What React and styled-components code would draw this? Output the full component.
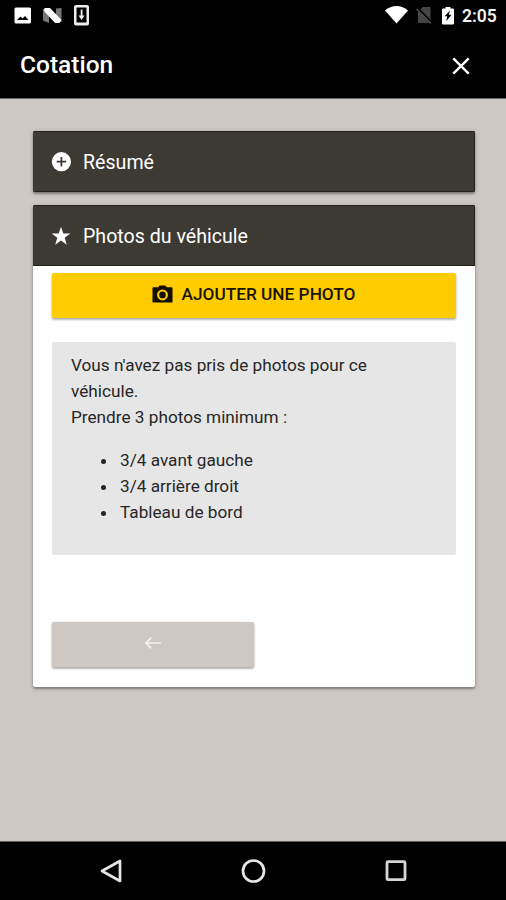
import React from 'react';
import styled, { createGlobalStyle } from 'styled-components';

const GlobalStyle = createGlobalStyle`
  * {
    box-sizing: border-box;
  }
  body {
    margin: 0;
    font-family: Roboto, 'Liberation Sans', sans-serif;
  }
`;

const Screen = styled.div`
  display: flex;
  flex-direction: column;
  height: 900px;
  width: 506px;
  overflow: hidden;
  background-color: #cdc8c4;
`;

const StatusBar = styled.div`
  display: flex;
  flex: none;
  justify-content: space-between;
  height: 31px;
  padding: 0 8px 0 14px;
  background-color: #000000;
`;

const StatusGroup = styled.div`
  display: flex;
  align-items: center;
  gap: ${(props) => props.$gap}px;
`;

const Clock = styled.div`
  width: 36px;
  margin-left: -1px;
  padding-top: 1px;
  color: #f4f4f4;
  font-size: 17.5px;
  font-weight: 600;
  white-space: nowrap;
`;

const AppBar = styled.header`
  display: flex;
  flex: none;
  align-items: center;
  justify-content: space-between;
  height: 68px;
  padding: 1px 36px 0 20px;
  background-color: #000000;
  border-bottom: 1px solid #63605d;
`;

const Title = styled.h1`
  margin: 0;
  padding-bottom: 2px;
  color: #ffffff;
  font-size: 24.5px;
  font-weight: 500;
`;

const IconButton = styled.button`
  display: flex;
  padding: 1px 0 0;
  border: none;
  background: none;
`;

const Content = styled.main`
  display: flex;
  flex: 1;
  flex-direction: column;
  gap: 13px;
  padding: 32px 31px 0 33px;
`;

const Card = styled.section`
  overflow: hidden;
  border-radius: 2px;
  background-color: #ffffff;
  box-shadow: 0 2px 2px rgba(0, 0, 0, 0.26), 0 1px 4px rgba(0, 0, 0, 0.24);
`;

const CardHeader = styled.div`
  display: flex;
  align-items: center;
  gap: 12px;
  height: 61px;
  padding-left: 17px;
  background-color: #3d3a34;
  border: 1px solid #25221d;
  border-left-color: #3d3a34;
  color: #ffffff;
  font-size: 19.6px;
`;

const CardTitle = styled.span`
  padding-top: 2px;
`;

const CardBody = styled.div`
  height: 421px;
  padding: 7px 19px 0;
`;

const Button = styled.button`
  display: flex;
  align-items: center;
  justify-content: center;
  gap: 8px;
  width: ${(props) => (props.$half ? '50%' : '100%')};
  height: 45px;
  padding: 0 0 ${(props) => (props.$half ? 3 : 4)}px;
  border: none;
  border-radius: 2px;
  background-color: ${(props) => (props.$half ? '#cdc8c4' : '#ffcc00')};
  box-shadow: 0 2px 2px rgba(0, 0, 0, 0.2), 0 1px 3px rgba(0, 0, 0, 0.2);
  color: #191400;
  font-family: inherit;
  font-size: 17.25px;
  font-weight: 500;
`;

const Notice = styled.div`
  height: 213px;
  margin: 24px 0 67px;
  padding: 10px 19px;
  border-radius: 2px;
  background-color: #e6e6e6;
  color: #262626;
  font-size: 17.2px;
  line-height: 26px;
  p {
    margin: 0;
  }
  ul {
    margin: 17px 0 0;
    padding-left: 47px;
  }
  li {
    padding-left: 2px;
  }
`;

const NavBar = styled.nav`
  display: flex;
  flex: none;
  align-items: center;
  justify-content: space-between;
  height: 59px;
  padding: 0 97px 0 99px;
  background-color: #000000;
  border-top: 1px solid #63605d;
`;

const App = () => {
  return (
    <>
      <GlobalStyle />
      <Screen>
        <StatusBar>
          <StatusGroup $gap={11}>
            <svg width='18' height='31' viewBox='0 0 18 31'>
              <rect x='0.5' y='7.5' width='16.5' height='16' rx='1.5' fill='#fff' />
              <path d='M3 20 L6.5 16.5 L8.5 18.5 L11 16 L14.5 20Z' fill='#000' />
            </svg>
            <svg width='20' height='31' viewBox='0 0 20 31'>
              <path d='M0 9H6V23L0 20.5ZM13 8.5L18.5 8V22H13Z' fill='#777' />
              <path d='M1.5 8H7L18.5 20L16.5 23H12L1 11Z' fill='#fff' />
            </svg>
            <svg width='16' height='31' viewBox='0 0 16 31'>
              <rect x='0' y='5' width='15' height='20.5' rx='2' fill='#eee' />
              <rect x='2.5' y='7.5' width='10' height='15' fill='#000' />
              <path d='M6.7 9.5H8.5V15.5H10.5L7.6 20L4.5 15.5H6.7Z' fill='#eee' />
            </svg>
          </StatusGroup>
          <StatusGroup $gap={8}>
            <svg width='23' height='31' viewBox='0 0 23 31'>
              <path d='M0 10.5C6.5 4.5 16.5 4.5 23 10.5L11.5 23.5Z' fill='#fff' />
            </svg>
            <svg width='17' height='31' viewBox='0 0 17 31'>
              <path d='M7 7H14.5V23H2V11Z' fill='#454545' />
              <path d='M1.5 8.5L15 22.5' stroke='#000' strokeWidth='3' />
              <path d='M0.5 9L15 23.5' stroke='#555' strokeWidth='1.3' />
            </svg>
            <svg width='14' height='31' viewBox='0 0 14 31'>
              <path d='M2 8.5H4.5V7H9.5V8.5H12Q13 8.5 13 9.5V23.5Q13 24.5 12 24.5H2Q1 24.5 1 23.5V9.5Q1 8.5 2 8.5Z' fill='#fff' />
              <path d='M9 10.5L3.5 16.2H6.2L5.2 21.2L10.5 14.8H7.8Z' fill='#000' />
            </svg>
            <Clock>2:05</Clock>
          </StatusGroup>
        </StatusBar>

        <AppBar>
          <Title>Cotation</Title>
          <IconButton aria-label='Fermer'>
            <svg width='18' height='18' viewBox='0 0 18 18'>
              <path d='M1.3 1.3L16.7 16.7M16.7 1.3L1.3 16.7' stroke='#fff' strokeWidth='2.4' />
            </svg>
          </IconButton>
        </AppBar>

        <Content>
          <Card>
            <CardHeader>
              <svg width='20' height='20' viewBox='0 0 20 20'>
                <circle cx='10.4' cy='9.7' r='9.6' fill='#fff' />
                <path d='M10.4 5V14.4M5.7 9.7H15.1' stroke='#3d3a34' strokeWidth='1.8' />
              </svg>
              <CardTitle>Résumé</CardTitle>
            </CardHeader>
          </Card>

          <Card>
            <CardHeader>
              <svg width='20' height='20' viewBox='0 0 20 20'>
                <path
                  d='M10 0.8L12.3 7.6H19.3L13.7 11.8L15.8 18.7L10 14.5L4.2 18.7L6.3 11.8L0.7 7.6H7.7Z'
                  fill='#fff'
                />
              </svg>
              <CardTitle>Photos du véhicule</CardTitle>
            </CardHeader>
            <CardBody>
              <Button>
                <svg width='21' height='18' viewBox='0 0 22 18'>
                  <path
                    d='M1.5 2H6.5L8 0H14L15.5 2H20.5Q21.5 2 21.5 3V17Q21.5 18 20.5 18H1.5Q0.5 18 0.5 17V3Q0.5 2 1.5 2Z'
                    fill='#141000'
                  />
                  <circle cx='11' cy='10' r='4.6' fill='none' stroke='#ffcc00' strokeWidth='2.2' />
                </svg>
                AJOUTER UNE PHOTO
              </Button>
              <Notice>
                <p>Vous n'avez pas pris de photos pour ce véhicule.</p>
                <p>Prendre 3 photos minimum :</p>
                <ul>
                  <li>3/4 avant gauche</li>
                  <li>3/4 arrière droit</li>
                  <li>Tableau de bord</li>
                </ul>
              </Notice>
              <Button $half aria-label='Retour'>
                <svg width='16' height='12' viewBox='0 0 16 12'>
                  <path d='M16 6H1M6.2 0.7L1 6L6.2 11.3' fill='none' stroke='#f2f0ee' strokeWidth='1.7' />
                </svg>
              </Button>
            </CardBody>
          </Card>
        </Content>

        <NavBar>
          <svg width='24' height='26' viewBox='0 0 24 26'>
            <path d='M21 3V23L3 13Z' fill='none' stroke='#e6e6e6' strokeWidth='2.7' strokeLinejoin='round' />
          </svg>
          <svg width='26' height='26' viewBox='0 0 26 26'>
            <circle cx='13.5' cy='13' r='10.5' fill='none' stroke='#e6e6e6' strokeWidth='2.7' />
          </svg>
          <svg width='26' height='26' viewBox='0 0 26 26'>
            <rect x='4' y='3.7' width='18' height='18' rx='1' fill='none' stroke='#d6d6d6' strokeWidth='2.8' />
          </svg>
        </NavBar>
      </Screen>
    </>
  );
};

export default App;
